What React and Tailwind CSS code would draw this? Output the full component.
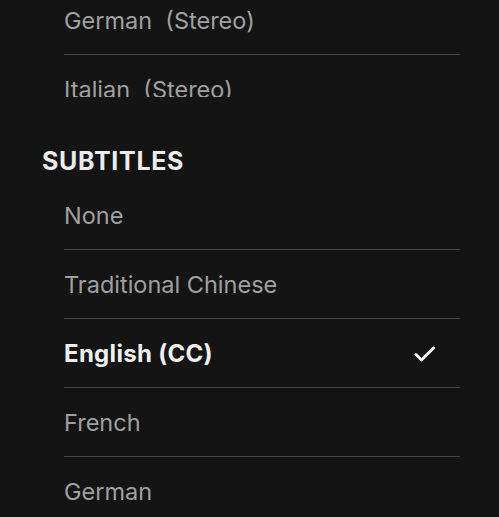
import React from "react";

const font = { fontFamily: "Inter, 'Noto Sans', sans-serif" };

function Row({ label, selected, last }) {
  return (
    <div
      className={
        "flex h-[69px] items-center justify-between pt-[1px] " +
        (last ? "" : "border-b border-[#474747]")
      }
    >
      <span
        className={
          selected
            ? "text-[24px] font-bold text-[#f0f0f0] tracking-[0.3px]"
            : "text-[23.5px] text-[#a0a0a0] whitespace-pre"
        }
      >
        {label}
      </span>
      {selected && (
        <svg width="22" height="18" viewBox="0 0 22 18" className="mr-[24px]">
          <path
            d="M2 9.5 L7.5 15 L19.5 3"
            fill="none"
            stroke="#f2f2f2"
            strokeWidth="3"
            strokeLinecap="round"
            strokeLinejoin="round"
          />
        </svg>
      )}
    </div>
  );
}

export default function App() {
  return (
    <div
      className="w-[499px] h-[517px] overflow-hidden bg-[#141414]"
      style={font}
    >
      <div className="h-[97px] overflow-hidden">
        <div className="-mt-[14px] ml-[64px] w-[396px]">
          <Row label={"German  (Stereo)"} />
          <Row label={"Italian  (Stereo)"} />
        </div>
      </div>
      <div className="flex h-[84px] items-end pb-[7px] pl-[42px]">
        <span className="text-[25px] leading-[26px] font-bold text-[#ececec] tracking-[0.7px]">
          SUBTITLES
        </span>
      </div>
      <div className="ml-[64px] w-[396px]">
        <Row label="None" />
        <Row label="Traditional Chinese" />
        <Row label="English (CC)" selected />
        <Row label="French" />
        <Row label="German" last />
      </div>
    </div>
  );
}
